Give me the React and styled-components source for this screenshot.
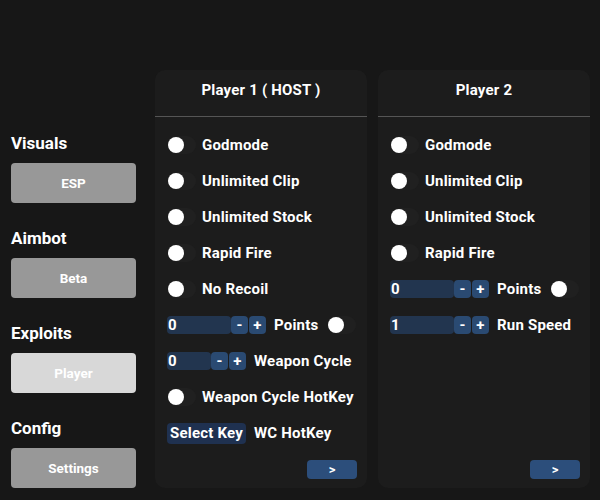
import styled, { createGlobalStyle } from 'styled-components';

const GlobalStyle = createGlobalStyle`
  body {
    margin: 0;
    background: #171717;
    font-family: Roboto, "Liberation Sans", sans-serif;
    color: #fff;
  }
`;

const Page = styled.div`
  display: flex;
  gap: 11px;
  width: 600px;
  height: 500px;
  padding: 70px 10px 12px 11px;
  box-sizing: border-box;
`;

const Sidebar = styled.nav`
  display: flex;
  flex-direction: column;
  width: 125px;
  padding-top: 63px;
  margin-right: 8px;
`;

const Section = styled.div`
  display: flex;
  flex-direction: column;
  margin-bottom: 25px;
`;

const SectionTitle = styled.h3`
  margin: 0 0 10px;
  font-size: 17px;
  line-height: 20px;
  font-weight: 700;
`;

const NavButton = styled.button`
  height: 40px;
  border: none;
  border-radius: 4px;
  background: ${(p) => (p.$active ? '#d8d8d8' : '#989898')};
  color: #fff;
  font-family: inherit;
  font-size: 13.5px;
  font-weight: 700;
`;

const Panel = styled.section`
  display: flex;
  flex-direction: column;
  width: 212px;
  background: #1c1c1c;
  border-radius: 10px;
  padding-bottom: 9px;
`;

const PanelHeader = styled.header`
  height: 46px;
  line-height: 40px;
  text-align: center;
  font-size: 15px;
  font-weight: 700;
  letter-spacing: 0.2px;
  border-bottom: 1px solid #555;
`;

const List = styled.div`
  display: flex;
  flex-direction: column;
  padding: 10px 10px 0 12px;
`;

const Row = styled.div`
  display: flex;
  align-items: center;
  height: 36px;
  gap: 8px;
  font-size: 15px;
  font-weight: 700;
  letter-spacing: 0.2px;
`;

const Track = styled.span`
  display: inline-flex;
  align-items: center;
  width: 28px;
  height: 18px;
  margin-left: ${(p) => p.$ml || 1}px;
  margin-right: -2px;
  border-radius: 9px;
  background: #202020;
`;

const Knob = styled.span`
  width: 16px;
  height: 16px;
  border-radius: 50%;
  background: #fff;
`;

const Stepper = styled.div`
  display: flex;
  height: 18px;
`;

const NumberField = styled.span`
  width: ${(p) => p.$w}px;
  line-height: 18px;
  background: #22354f;
  border-radius: 4px;
  font-size: 15px;
  font-weight: 700;
  padding-left: 1px;
  box-sizing: border-box;
`;

const StepButton = styled.span`
  width: 17px;
  margin-left: ${(p) => (p.$gap ? 1 : 0)}px;
  line-height: 18px;
  text-align: center;
  background: #2a4a72;
  border-radius: 4px;
  font-size: 15px;
  font-weight: 700;
`;

const KeyButton = styled.span`
  padding: 0 3px;
  line-height: 21px;
  background: #1f3150;
  border-radius: 4px;
  font-size: 15px;
  font-weight: 700;
`;

const Footer = styled.div`
  display: flex;
  justify-content: flex-end;
  margin-top: auto;
  padding-right: 10px;
`;

const NextButton = styled.button`
  width: 50px;
  height: 19px;
  border: none;
  border-radius: 4px;
  background: #2c4e7b;
  color: #fff;
  font-family: inherit;
  font-size: 13px;
  font-weight: 700;
  padding: 0;
`;

const Toggle = ({ ml }) => (
  <Track $ml={ml}>
    <Knob />
  </Track>
);

const Counter = ({ value, width }) => (
  <Stepper>
    <NumberField $w={width}>{value}</NumberField>
    <StepButton>-</StepButton>
    <StepButton $gap>+</StepButton>
  </Stepper>
);

const nav = [
  { title: 'Visuals', label: 'ESP' },
  { title: 'Aimbot', label: 'Beta' },
  { title: 'Exploits', label: 'Player', active: true },
  { title: 'Config', label: 'Settings' },
];

export default function App() {
  return (
    <>
      <GlobalStyle />
      <Page>
        <Sidebar>
          {nav.map((n) => (
            <Section key={n.title}>
              <SectionTitle>{n.title}</SectionTitle>
              <NavButton $active={n.active}>{n.label}</NavButton>
            </Section>
          ))}
        </Sidebar>

        <Panel>
          <PanelHeader>Player 1 ( HOST )</PanelHeader>
          <List>
            {['Godmode', 'Unlimited Clip', 'Unlimited Stock', 'Rapid Fire', 'No Recoil'].map((t) => (
              <Row key={t}>
                <Toggle />
                {t}
              </Row>
            ))}
            <Row>
              <Counter value="0" width={64} />
              Points
              <Toggle ml={2} />
            </Row>
            <Row>
              <Counter value="0" width={44} />
              Weapon Cycle
            </Row>
            <Row>
              <Toggle />
              Weapon Cycle HotKey
            </Row>
            <Row>
              <KeyButton>Select Key</KeyButton>
              WC HotKey
            </Row>
          </List>
          <Footer>
            <NextButton>&gt;</NextButton>
          </Footer>
        </Panel>

        <Panel>
          <PanelHeader>Player 2</PanelHeader>
          <List>
            {['Godmode', 'Unlimited Clip', 'Unlimited Stock', 'Rapid Fire'].map((t) => (
              <Row key={t}>
                <Toggle />
                {t}
              </Row>
            ))}
            <Row>
              <Counter value="0" width={64} />
              Points
              <Toggle ml={2} />
            </Row>
            <Row>
              <Counter value="1" width={64} />
              Run Speed
            </Row>
          </List>
          <Footer>
            <NextButton>&gt;</NextButton>
          </Footer>
        </Panel>
      </Page>
    </>
  );
}
